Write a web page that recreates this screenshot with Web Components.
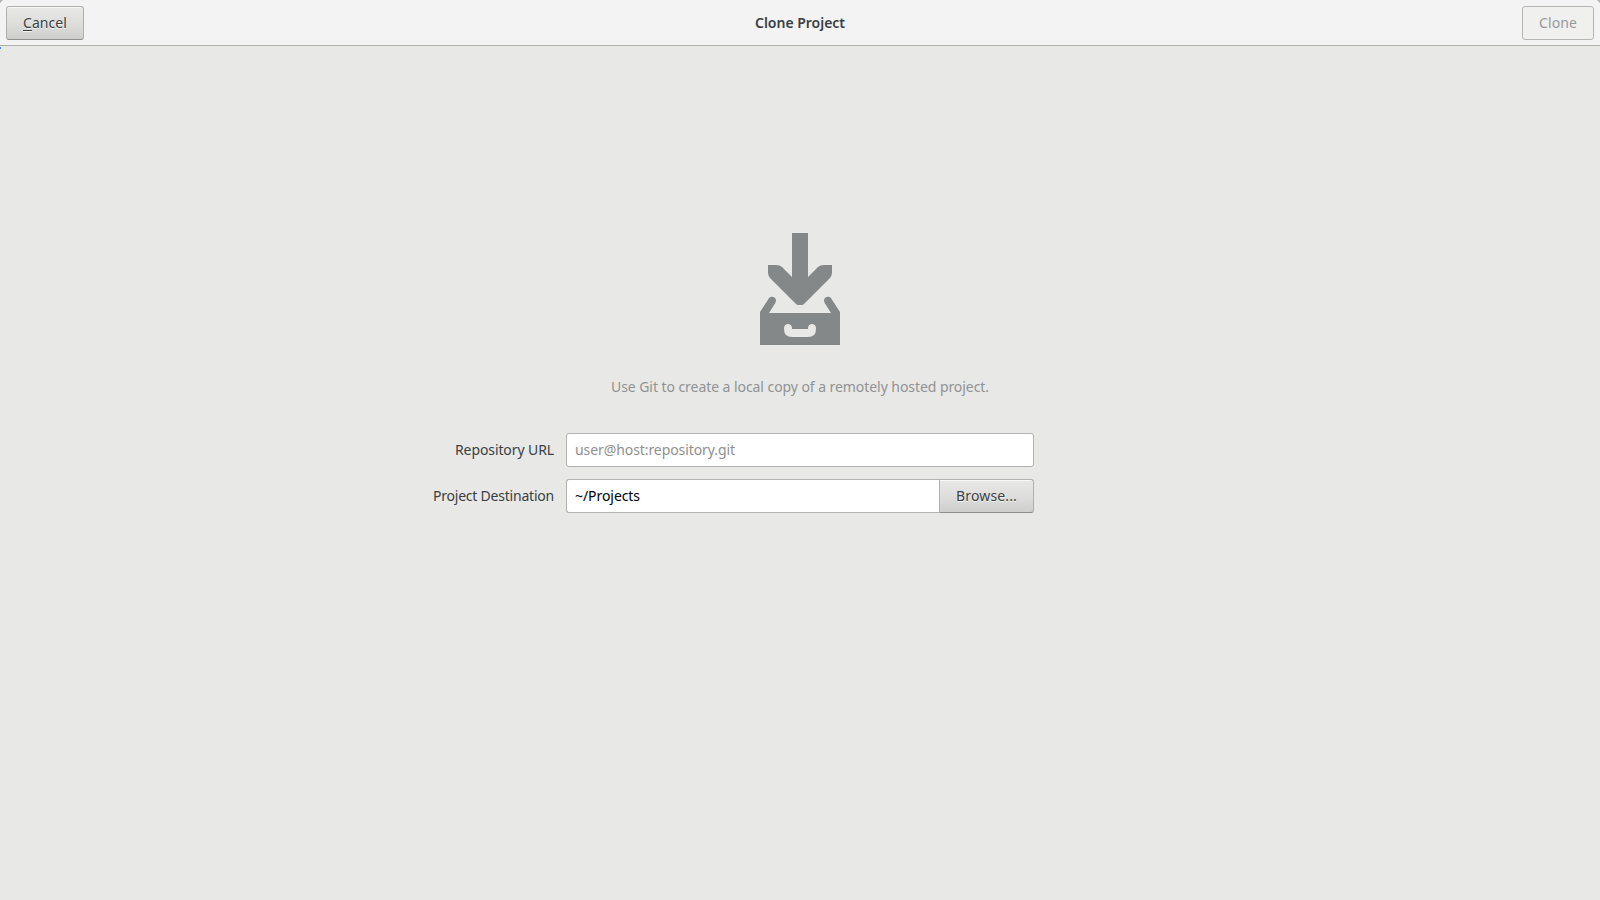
<!DOCTYPE html>
<html lang="en"><head><meta charset="utf-8"><title>Clone Project</title>
<style>html,body{margin:0;height:100%;overflow:hidden}body{background:#e8e8e6}</style></head><body>
<clone-window></clone-window>
<script>
const define=(name,html,ready)=>customElements.define(name,class extends HTMLElement{
  constructor(){super();this.attachShadow({mode:'open'}).innerHTML=html;}
  connectedCallback(){if(ready)ready(this);}
});
// Label whose tracking is spread so the text fills the given width.
define('ui-text',`<style>:host{display:inline-block;white-space:pre;line-height:20px;flex:none}span{display:inline-block}</style><span><slot></slot></span>`,el=>{
  const s=el.shadowRoot.querySelector('span'),w=+el.getAttribute('width');
  const n=el.textContent.length,have=s.getBoundingClientRect().width;
  if(w&&have){s.style.letterSpacing=((w-have)/n)+'px';el.style.width=w+'px';}
});
define('ui-button',`<style>
:host{display:flex;box-sizing:border-box;height:34px;align-items:center;justify-content:center;border:1px solid #b0b1ae;border-bottom-color:#8f908e;border-radius:3px;background:linear-gradient(#e8e8e7,#dededd 50%,#cececc);box-shadow:inset 0 1px #f8f8f7;color:#3a4043;text-shadow:0 1px #ffffffb0}
:host([disabled]){background:#f0f0ef;border-color:#b5b6b3;box-shadow:none;color:#979a9a;text-shadow:none}
:host([linked]){border-radius:0 3px 3px 0}
</style><slot></slot>`);
define('ui-entry',`<style>
:host{display:flex;box-sizing:border-box;height:34px;align-items:center;border:1px solid #b2b3b0;border-radius:3px;background:#fff;padding-left:8px;color:#000}
:host([placeholder]){color:#909090}
:host([linked]){border-radius:3px 0 0 3px;border-right:0}
</style><slot></slot>`);
define('header-bar',`<style>
:host{display:grid;grid-template-columns:1fr auto 1fr;align-items:center;box-sizing:border-box;height:46px;padding:0 6px;border-bottom:1px solid #afb0ad;background:#f3f3f3}
.end{justify-self:end}svg{position:absolute;top:0}.l{left:0}.r{right:0;transform:scaleX(-1)}
</style><svg class="l" width="4" height="4"><path d="M0 0H3L0 3Z" fill="#b2b4b1"/></svg><svg class="r" width="4" height="4"><path d="M0 0H3L0 3Z" fill="#b2b4b1"/></svg><div><slot name="start"></slot></div><slot></slot><div class="end"><slot name="end"></slot></div>`);
define('save-icon',`<style>:host{display:block;width:80px;height:112px}svg{display:block}</style>
<svg width="80" height="112" viewBox="760 233 80 112" fill="#848888"><path d="M792 233H808V277L818 267Q820.500 265 824 265H832V273Q832 276 829.500 278.500L804 304Q803 305 801.500 305H798.500Q797 305 796 304L770.500 278.500Q768 276 768 273V265H776Q779.500 265 782 267L792 277Z"/><path fill-rule="evenodd" d="M760 312L768.600 298.700C771.600 294.200 778.200 298.300 775.300 302.900L769 313H831L824.700 302.900C821.800 298.300 828.400 294.200 831.400 298.700L840 312V345H760ZM784 328C784 322.700 792 322.700 792 328V329H808V328C808 322.700 816 322.700 816 328V329Q816 337 808 337H792Q784 337 784 329Z"/></svg>`);
define('clone-form',`<style>
:host{display:flex;flex-direction:column;align-items:center;padding-top:187px}
.desc{margin-top:32px;height:20px;color:#909393}
.grid{display:grid;grid-template-columns:121px 468px;column-gap:12px;row-gap:12px;align-items:center;margin:36px 133px 0 0;color:#3a4043}
.lab{justify-self:end}.linked{display:grid;grid-template-columns:1fr 95px}
</style><save-icon></save-icon><div class="desc"><ui-text width="378">Use Git to create a local copy of a remotely hosted project.</ui-text></div>
<div class="grid"><ui-text class="lab" width="99">Repository URL</ui-text><ui-entry placeholder><ui-text width="160">user@host:repository.git</ui-text></ui-entry>
<ui-text class="lab" width="121">Project Destination</ui-text><div class="linked"><ui-entry linked><ui-text width="65">~/Projects</ui-text></ui-entry><ui-button linked><ui-text width="61">Browse...</ui-text></ui-button></div></div>`);
define('clone-window',`<style>
:host{display:block;height:100vh;position:relative;background:#e8e8e6;font:14px/20px "Noto Sans","Open Sans",sans-serif;color:#3a4043}
.cancel{width:78px}.clone{width:72px}.title{font-weight:600}u{text-decoration-thickness:1px;text-underline-offset:2px}
.progress{position:absolute;left:0;top:47px;width:1px;height:2px;background:#4a90d9}
</style><header-bar><ui-button class="cancel" slot="start"><ui-text width="44"><u>C</u>ancel</ui-text></ui-button><ui-text class="title" width="90">Clone Project</ui-text><ui-button class="clone" slot="end" disabled><ui-text width="38">Clone</ui-text></ui-button></header-bar><div class="progress"></div><clone-form></clone-form>`);
</script></body></html>
